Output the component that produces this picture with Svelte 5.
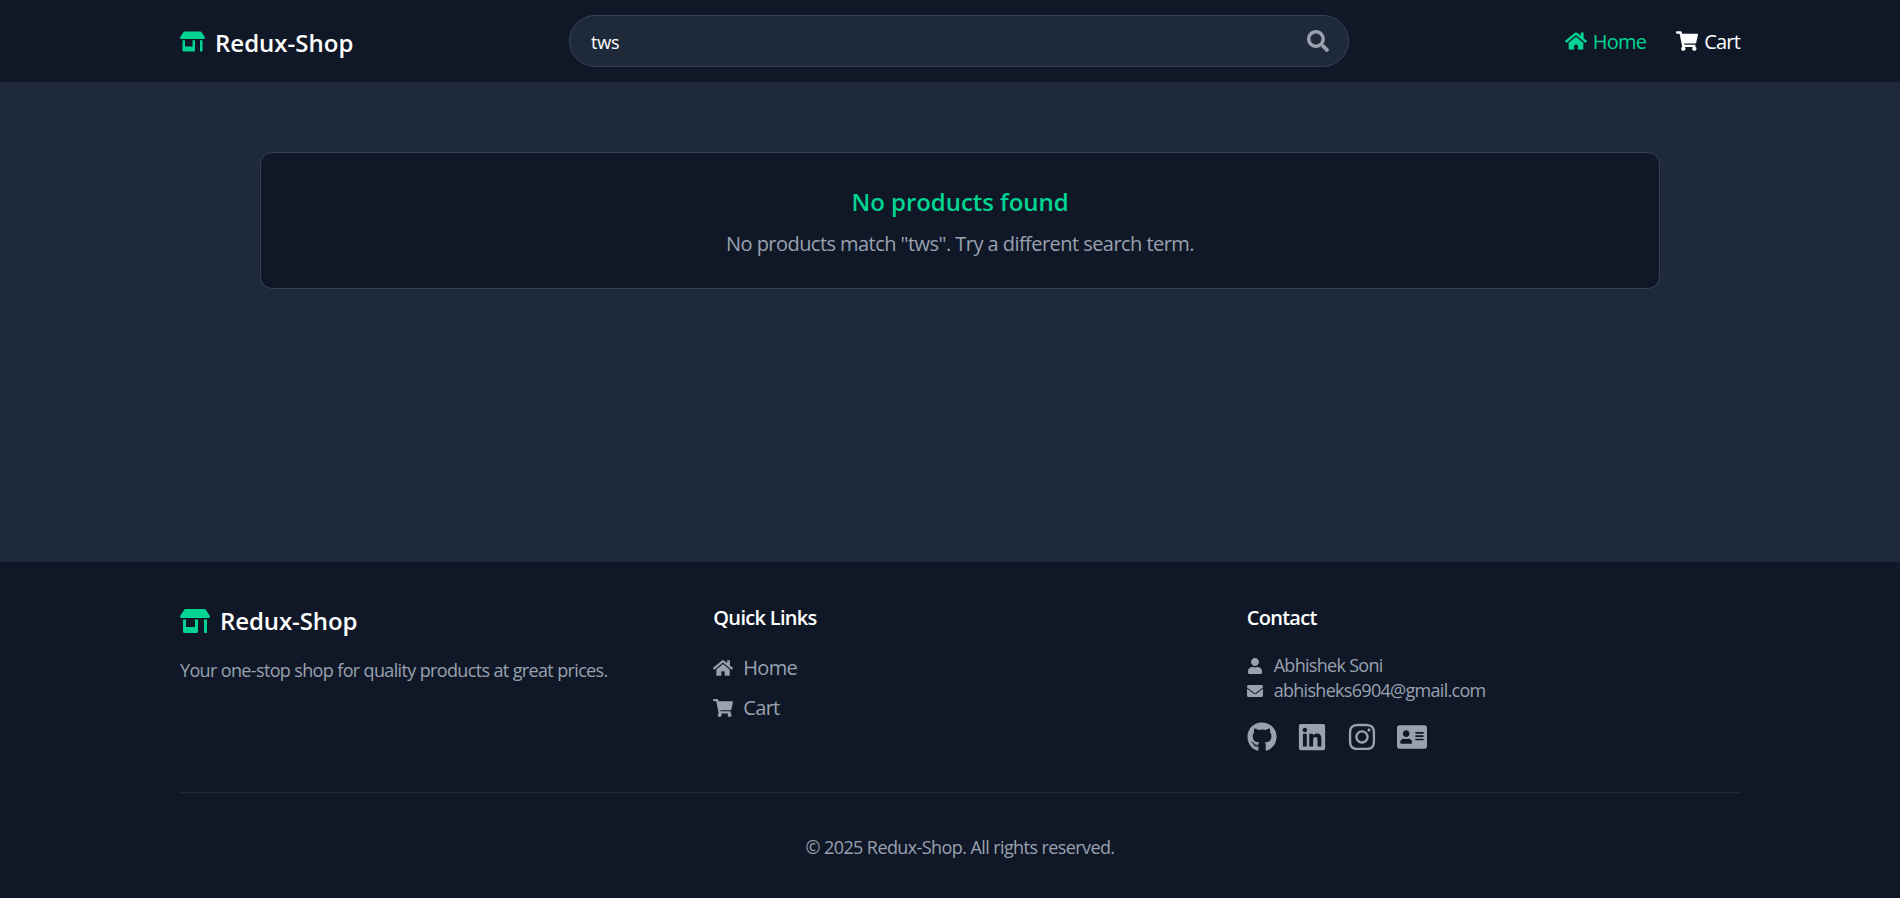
<script>
  const icons = {
    store: { box: '0 0 640 512', d: 'M320 384H128V224H64v256c0 17.7 14.3 32 32 32h256c17.7 0 32-14.3 32-32V224h-64v160zm314.6-241.8l-85.3-128c-6-8.9-16-14.2-26.7-14.2H117.4c-10.7 0-20.7 5.3-26.6 14.2l-85.3 128c-14.2 21.3 1 49.8 26.6 49.8H608c25.5 0 40.7-28.5 26.6-49.8zM512 496c0 8.8 7.2 16 16 16h32c8.8 0 16-7.2 16-16V224h-64v272z' },
    home: { box: '0 0 576 512', d: 'M280.37 148.26L96 300.11V464a16 16 0 0 0 16 16l112.06-.29a16 16 0 0 0 15.92-16V368a16 16 0 0 1 16-16h64a16 16 0 0 1 16 16v95.64a16 16 0 0 0 16 16.05L464 480a16 16 0 0 0 16-16V300L295.67 148.26a12.19 12.19 0 0 0-15.3 0zM571.6 251.47L488 182.56V44.05a12 12 0 0 0-12-12h-56a12 12 0 0 0-12 12v72.61L318.47 43a48 48 0 0 0-61 0L4.34 251.47a12 12 0 0 0-1.6 16.9l25.5 31A12 12 0 0 0 45.15 301l235.22-193.74a12.19 12.19 0 0 1 15.3 0L530.9 301a12 12 0 0 0 16.9-1.6l25.5-31a12 12 0 0 0-1.7-16.93z' },
    cart: { box: '0 0 576 512', d: 'M528.12 301.319l47.273-208C578.806 78.301 567.391 64 551.99 64H159.208l-9.166-44.81C147.758 8.021 137.93 0 126.529 0H24C10.745 0 0 10.745 0 24v16c0 13.255 10.745 24 24 24h69.883l70.248 343.435C147.325 417.1 136 435.222 136 456c0 30.928 25.072 56 56 56s56-25.072 56-56c0-15.674-6.447-29.835-16.824-40h209.647C430.447 426.165 424 440.326 424 456c0 30.928 25.072 56 56 56s56-25.072 56-56c0-22.172-12.888-41.332-31.579-50.405l5.517-24.276c3.413-15.018-8.002-29.319-23.403-29.319H218.117l-6.545-32h293.145c11.206 0 20.92-7.754 23.403-18.681z' },
    search: { box: '0 0 512 512', d: 'M505 442.7L405.3 343c-4.5-4.5-10.6-7-17-7H372c27.6-35.3 44-79.7 44-128C416 93.1 322.9 0 208 0S0 93.1 0 208s93.1 208 208 208c48.3 0 92.7-16.4 128-44v16.3c0 6.4 2.5 12.5 7 17l99.7 99.7c9.4 9.4 24.6 9.4 33.9 0l28.3-28.3c9.4-9.4 9.4-24.6.1-34zM208 336c-70.7 0-128-57.2-128-128 0-70.7 57.2-128 128-128 70.7 0 128 57.2 128 128 0 70.7-57.2 128-128 128z' },
    user: { box: '0 0 448 512', d: 'M224 256c70.7 0 128-57.3 128-128S294.7 0 224 0 96 57.3 96 128s57.3 128 128 128zm89.6 32h-16.7c-22.2 10.2-46.9 16-72.9 16s-50.6-5.8-72.9-16h-16.7C60.2 288 0 348.2 0 422.4V464c0 26.5 21.5 48 48 48h352c26.5 0 48-21.5 48-48v-41.6c0-74.2-60.2-134.4-134.4-134.4z' },
    envelope: { box: '0 0 512 512', d: 'M502.3 190.8c3.9-3.1 9.7-.2 9.7 4.7V400c0 26.5-21.5 48-48 48H48c-26.5 0-48-21.5-48-48V195.6c0-5 5.7-7.8 9.7-4.7 22.4 17.4 52.1 39.5 154.1 113.6 21.1 15.4 56.7 47.8 92.2 47.6 35.7.3 72-32.8 92.3-47.6 102-74.1 131.6-96.3 154-113.7zM256 320c23.2.4 56.6-29.2 73.4-41.4 132.7-96.3 142.8-104.7 173.4-128.7 5.8-4.5 9.2-11.5 9.2-18.9v-19c0-26.5-21.5-48-48-48H48C21.5 64 0 85.5 0 112v19c0 7.4 3.4 14.3 9.2 18.9 30.6 23.9 40.7 32.4 173.4 128.7 16.8 12.2 50.2 41.8 73.4 41.4z' },
    github: { box: '0 0 496 512', d: 'M165.9 397.4c0 2-2.3 3.6-5.2 3.6-3.3.3-5.6-1.3-5.6-3.6 0-2 2.3-3.6 5.2-3.6 3-.3 5.6 1.3 5.6 3.6zm-31.1-4.5c-.7 2 1.3 4.3 4.3 4.9 2.6 1 5.6 0 6.2-2s-1.3-4.3-4.3-5.2c-2.6-.7-5.5.3-6.2 2.3zm44.2-1.7c-2.9.7-4.9 2.6-4.6 4.9.3 2 2.9 3.3 5.9 2.6 2.9-.7 4.9-2.6 4.6-4.6-.3-1.9-3-3.2-5.9-2.9zM244.8 8C106.1 8 0 113.3 0 252c0 110.9 69.8 205.8 169.5 239.2 12.8 2.3 17.3-5.6 17.3-12.1 0-6.2-.3-40.4-.3-61.4 0 0-70 15-84.7-29.8 0 0-11.4-29.1-27.8-36.6 0 0-22.9-15.7 1.6-15.4 0 0 24.9 2 38.6 25.8 21.9 38.6 58.6 27.5 72.9 20.9 2.3-16 8.8-27.1 16-33.7-55.9-6.2-112.3-14.3-112.3-110.5 0-27.5 7.6-41.3 23.6-58.9-2.6-6.5-11.1-33.3 2.6-67.9 20.9-6.5 69 27 69 27 20-5.6 41.5-8.5 62.8-8.5s42.8 2.9 62.8 8.5c0 0 48.1-33.6 69-27 13.7 34.7 5.2 61.4 2.6 67.9 16 17.7 25.8 31.5 25.8 58.9 0 96.5-58.9 104.2-114.8 110.5 9.2 7.9 17 22.9 17 46.4 0 33.7-.3 75.4-.3 83.6 0 6.5 4.6 14.4 17.3 12.1C428.2 457.8 496 362.9 496 252 496 113.3 383.5 8 244.8 8zM97.2 352.9c-1.3 1-1 3.3.7 5.2 1.6 1.6 3.9 2.3 5.2 1 1.3-1 1-3.3-.7-5.2-1.6-1.6-3.9-2.3-5.2-1zm-10.8-8.1c-.7 1.3.3 2.9 2.3 3.9 1.6 1 3.6.7 4.3-.7.7-1.3-.3-2.9-2.3-3.9-2-.6-3.6-.3-4.3.7zm32.4 35.6c-1.6 1.3-1 4.3 1.3 6.2 2.3 2.3 5.2 2.6 6.5 1 1.3-1.3.7-4.3-1.3-6.2-2.2-2.3-5.2-2.6-6.5-1zm-11.4-14.7c-1.6 1-1.6 3.6 0 5.9 1.6 2.3 4.3 3.3 5.6 2.3 1.6-1.3 1.6-3.9 0-6.2-1.4-2.3-4-3.3-5.6-2z' },
    linkedin: { box: '0 0 448 512', d: 'M416 32H31.9C14.3 32 0 46.5 0 64.3v383.4C0 465.5 14.3 480 31.9 480H416c17.6 0 32-14.5 32-32.3V64.3c0-17.8-14.4-32.3-32-32.3zM135.4 416H69V202.2h66.5V416zm-33.2-243c-21.3 0-38.5-17.3-38.5-38.5S80.9 96 102.2 96c21.2 0 38.5 17.3 38.5 38.5 0 21.3-17.2 38.5-38.5 38.5zm282.1 243h-66.4V312c0-24.8-.5-56.7-34.5-56.7-34.6 0-39.9 27-39.9 54.9V416h-66.4V202.2h63.7v29.2h.9c8.9-16.8 30.6-34.5 62.9-34.5 67.2 0 79.7 44.3 79.7 101.9V416z' },
    instagram: { box: '0 0 448 512', d: 'M224.1 141c-63.6 0-114.9 51.3-114.9 114.9s51.3 114.9 114.9 114.9S339 319.5 339 255.9 287.7 141 224.1 141zm0 189.6c-41.1 0-74.7-33.5-74.7-74.7s33.5-74.7 74.7-74.7 74.7 33.5 74.7 74.7-33.6 74.7-74.7 74.7zm146.4-194.3c0 14.9-12 26.8-26.8 26.8-14.9 0-26.8-12-26.8-26.8s12-26.8 26.8-26.8 26.8 12 26.8 26.8zm76.1 27.2c-1.7-35.9-9.9-67.7-36.2-93.9-26.2-26.2-58-34.4-93.9-36.2-37-2.1-147.9-2.1-184.9 0-35.8 1.7-67.6 9.9-93.9 36.1s-34.4 58-36.2 93.9c-2.1 37-2.1 147.9 0 184.9 1.7 35.9 9.9 67.7 36.2 93.9s58 34.4 93.9 36.2c37 2.1 147.9 2.1 184.9 0 35.9-1.7 67.7-9.9 93.9-36.2 26.2-26.2 34.4-58 36.2-93.9 2.1-37 2.1-147.8 0-184.8zM398.8 388c-7.8 19.6-22.9 34.7-42.6 42.6-29.5 11.7-99.5 9-132.1 9s-102.7 2.6-132.1-9c-19.6-7.8-34.7-22.9-42.6-42.6-11.7-29.5-9-99.5-9-132.1s-2.6-102.7 9-132.1c7.8-19.6 22.9-34.7 42.6-42.6 29.5-11.7 99.5-9 132.1-9s102.7-2.6 132.1 9c19.6 7.8 34.7 22.9 42.6 42.6 11.7 29.5 9 99.5 9 132.1s2.7 102.7-9 132.1z' },
    card: { box: '0 0 576 512', d: 'M528 32H48C21.5 32 0 53.5 0 80v352c0 26.5 21.5 48 48 48h480c26.5 0 48-21.5 48-48V80c0-26.5-21.5-48-48-48zm-352 96c35.3 0 64 28.7 64 64s-28.7 64-64 64-64-28.7-64-64 28.7-64 64-64zm112 236.8c0 10.6-10 19.2-22.4 19.2H86.4C74 384 64 375.4 64 364.8v-19.2c0-31.8 30.1-57.6 67.2-57.6h5c12.3 5.1 25.7 8 39.8 8s27.6-2.9 39.8-8h5c37.1 0 67.2 25.8 67.2 57.6v19.2zM512 312c0 4.4-3.6 8-8 8H360c-4.4 0-8-3.6-8-8v-16c0-4.4 3.6-8 8-8h144c4.4 0 8 3.6 8 8v16zm0-64c0 4.4-3.6 8-8 8H360c-4.4 0-8-3.6-8-8v-16c0-4.4 3.6-8 8-8h144c4.4 0 8 3.6 8 8v16zm0-64c0 4.4-3.6 8-8 8H360c-4.4 0-8-3.6-8-8v-16c0-4.4 3.6-8 8-8h144c4.4 0 8 3.6 8 8v16z' }
  };

  const socials = ['github', 'linkedin', 'instagram', 'card'];
  let query = 'tws';
</script>

{#snippet icon(name)}
  <svg class="icon" viewBox={icons[name].box} fill="currentColor" aria-hidden="true"><path d={icons[name].d} /></svg>
{/snippet}

<div class="page">
  <header class="topbar">
    <div class="container topbar-row">
      <a class="logo" href="#top"><span class="logo-icon">{@render icon('store')}</span><span class="logo-text">Redux-Shop</span></a>
      <div class="search">
        <input type="text" bind:value={query} />
        <span class="search-icon">{@render icon('search')}</span>
      </div>
      <nav>
        <a class="nav-link active" href="#top">{@render icon('home')}Home</a>
        <a class="nav-link" href="#top">{@render icon('cart')}Cart</a>
      </nav>
    </div>
  </header>

  <main>
    <section class="empty">
      <h2>No products found</h2>
      <p>No products match "tws". Try a different search term.</p>
    </section>
  </main>

  <footer>
    <div class="container">
      <div class="columns">
        <div>
          <a class="footer-logo" href="#top"><span class="footer-logo-icon">{@render icon('store')}</span>Redux-Shop</a>
          <p class="tagline">Your one-stop shop for quality products at great prices.</p>
        </div>
        <div>
          <h3>Quick Links</h3>
          <ul class="links">
            <li><a href="#top">{@render icon('home')}Home</a></li>
            <li><a href="#top">{@render icon('cart')}Cart</a></li>
          </ul>
        </div>
        <div>
          <h3>Contact</h3>
          <ul class="contact">
            <li>{@render icon('user')}Abhishek Soni</li>
            <li>{@render icon('envelope')}abhisheks6904@gmail.com</li>
          </ul>
          <div class="socials">
            {#each socials as name}
              <a href="#top" aria-label={name}>{@render icon(name)}</a>
            {/each}
          </div>
        </div>
      </div>
      <div class="copyright">© 2025 Redux-Shop. All rights reserved.</div>
    </div>
  </footer>
</div>

<style>
  :global(body) {
    margin: 0;
    overflow: hidden;
    background: #1e2939;
    font-family: "Open Sans", "Noto Sans", sans-serif;
  }
  a { color: inherit; text-decoration: none; }
  h2, h3, p, ul { margin: 0; padding: 0; }
  ul { list-style: none; }
  .icon { display: block; width: 1em; height: 1em; flex: none; }

  .page { width: 1920px; min-height: 898px; display: flex; flex-direction: column; }
  .container { width: 1560px; margin: 0 auto; }

  .topbar { background: #101828; height: 82px; }
  .topbar-row { height: 100%; display: flex; align-items: center; justify-content: space-between; }
  .logo {
    display: flex; align-items: center; gap: 10px;
    color: #fff; font-size: 24px; font-weight: 600;
  }
  .logo-text { padding-top: 2px; }
  .logo-icon { font-size: 25px; color: #00d492; }

  .search { position: relative; width: 780px; }
  .search input {
    display: block; width: 100%; height: 52px; box-sizing: border-box;
    padding: 2px 60px 0 21px; border: 1px solid #364153; border-radius: 26px;
    background: #1e2939; color: #fff; outline: none;
    font: 400 18px "Open Sans", sans-serif; letter-spacing: -0.2px;
  }
  .search-icon { position: absolute; right: 20px; top: 15px; font-size: 22px; color: #99a1af; }

  nav { display: flex; gap: 30px; }
  .nav-link {
    display: flex; align-items: center; gap: 6px;
    color: #fff; font-size: 20px; letter-spacing: -0.8px;
  }
  .nav-link .icon { font-size: 22px; }
  .nav-link.active { color: #00d492; }

  main { flex: 1; padding: 70px 0 0; }
  .empty {
    box-sizing: border-box; width: 1400px; height: 137px; margin: 0 auto;
    padding-top: 33px; text-align: center;
    background: #101828; border: 1px solid #364153; border-radius: 12px;
  }
  .empty h2 { color: #00d492; font-size: 24px; line-height: 32px; font-weight: 600; letter-spacing: -0.05px; }
  .empty p { margin-top: 12px; color: #99a1af; font-size: 20px; line-height: 28px; letter-spacing: -0.55px; }

  footer { background: #101828; height: 336px; box-sizing: border-box; padding-top: 42px; }
  .columns {
    display: grid; grid-template-columns: repeat(3, 1fr); gap: 40px;
    height: 188px; border-bottom: 1px solid #1e2939;
  }
  .footer-logo {
    display: flex; align-items: center; gap: 10px; margin-top: 1px;
    color: #fff; font-size: 24px; line-height: 32px; font-weight: 600; letter-spacing: -0.1px;
  }
  .footer-logo-icon { font-size: 30px; color: #00d492; }
  .tagline { margin-top: 19px; color: #99a1af; font-size: 18px; line-height: 28px; letter-spacing: -0.64px; }

  h3 { color: #fff; font-size: 20px; line-height: 28px; font-weight: 600; letter-spacing: -0.7px; }
  .links { margin-top: 22px; display: flex; flex-direction: column; gap: 12px; color: #99a1af; font-size: 20px; line-height: 28px; letter-spacing: -0.7px; }
  .links a { display: flex; align-items: center; gap: 10px; }
  .links .icon { font-size: 20px; }
  .contact { margin-top: 21px; display: flex; flex-direction: column; color: #99a1af; font-size: 18px; line-height: 25px; letter-spacing: -0.7px; }
  .contact li { display: flex; align-items: center; gap: 11px; }
  .contact .icon { font-size: 16px; }
  .socials { margin-top: 19px; display: flex; gap: 20px; color: #99a1af; }
  .socials .icon { font-size: 30px; }

  .copyright { padding-top: 40px; text-align: center; color: #99a1af; font-size: 18px; line-height: 28px; letter-spacing: -0.59px; }
</style>
